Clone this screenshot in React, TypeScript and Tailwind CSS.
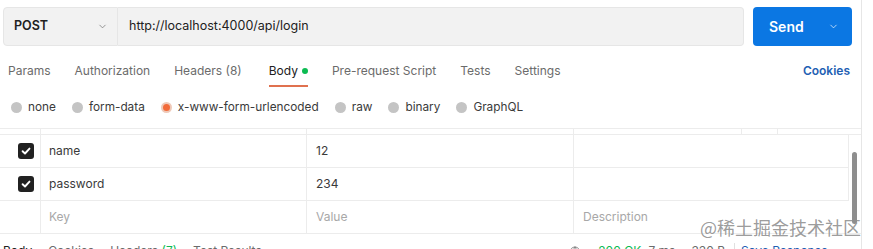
import { ChevronDown, Globe } from 'lucide-react';

const tabs = ['Params', 'Authorization', 'Headers (8)', 'Body', 'Pre-request Script', 'Tests', 'Settings'];

const bodyTypes = ['none', 'form-data', 'x-www-form-urlencoded', 'raw', 'binary', 'GraphQL'];

const rows = [
  { key: 'name', value: '12' },
  { key: 'password', value: '234' },
];

function Check() {
  return (
    <div className="w-4 h-4 rounded-[3px] bg-[#212121] flex items-center justify-center">
      <svg width="10" height="10" viewBox="0 0 10 10" fill="none">
        <path d="M1.6 5.2 L4 7.5 L8.5 2.6" stroke="white" strokeWidth="1.9" strokeLinecap="round" strokeLinejoin="round" />
      </svg>
    </div>
  );
}

export default function App() {
  return (
    <div className="w-[873px] h-[249px] overflow-hidden bg-white relative font-['Inter',sans-serif] text-[12px] text-[#212121]">
      <div className="w-[862px] h-full border-r border-[#e6e6e6] flex flex-col">
        {/* request bar */}
        <div className="flex pt-[7px] pl-[3px] pr-[9px] h-[46px] shrink-0">
          <div className="w-[115px] h-[39px] bg-[#f2f2f2] border border-[#e6e6e6] rounded-l-[4px] flex items-center justify-between pl-[10px] pr-[9px]">
            <span className="font-semibold text-[12.5px]">POST</span>
            <ChevronDown className="w-[11px] h-[11px] text-[#6b6b6b]" strokeWidth={1.5} />
          </div>
          <div className="flex-1 h-[39px] bg-[#f2f2f2] border border-l-0 border-[#e6e6e6] rounded-r-[4px] flex items-center pl-[11px] text-[12.5px]">
            http://localhost:4000/api/login
          </div>
          <div className="ml-[9px] w-[99px] h-[39px] bg-[#0b77e3] rounded-[4px] flex items-center justify-between pl-[16px] pr-[13px] text-white">
            <span className="font-semibold text-[14px]">Send</span>
            <ChevronDown className="w-[11px] h-[11px]" strokeWidth={1.5} />
          </div>
        </div>

        {/* tabs */}
        <div className="flex items-stretch mt-[10px] h-[31px] pl-[8px] pr-[11px] shrink-0">
          <div className="flex gap-[24px]">
            {tabs.map((t) => (
              <div
                key={t}
                className={
                  t === 'Body'
                    ? 'ml-[3px] flex items-center gap-[4px] border-b-2 border-[#e0714f] text-[#212121]'
                    : 'flex items-center border-b-2 border-transparent text-[#6b6b6b]'
                }
              >
                {t}
                {t === 'Body' && <span className="w-[6px] h-[6px] rounded-full bg-[#0cbb52]" />}
              </div>
            ))}
          </div>
          <div className="ml-auto flex items-center pb-[2px] font-semibold text-[#1f5fb3]">Cookies</div>
        </div>

        {/* body types */}
        <div className="flex items-center h-[41px] pl-[11px] gap-[16px] shrink-0">
          {bodyTypes.map((b) => (
            <div key={b} className="flex items-center gap-[6px]">
              {b === 'x-www-form-urlencoded' ? (
                <span className="w-[11px] h-[11px] rounded-full bg-[#efc9b8] flex items-center justify-center">
                  <span className="w-[7px] h-[7px] rounded-full bg-[#f26b3a]" />
                </span>
              ) : (
                <span className="w-[11px] h-[11px] rounded-full bg-[#c4c4c4]" />
              )}
              <span className="text-[11.8px] text-[#3a3a3a]">{b}</span>
            </div>
          ))}
        </div>

        {/* params table */}
        <div className="border-t border-[#ececec] shrink-0">
          <div className="flex h-[6px] border-b border-[#ececec]">
            <div className="w-[41px] border-r border-[#ececec]" />
            <div className="w-[266px] border-r border-[#ececec]" />
            <div className="w-[267px] border-r border-[#ececec]" />
            <div className="w-[168px] border-r border-[#ececec]" />
            <div className="w-[36px] border-r border-[#ececec]" />
          </div>
          {rows.map((r) => (
            <div key={r.key} className="flex h-[33px] border-b border-[#ececec] w-[849px]">
              <div className="w-[41px] border-r border-[#ececec] flex items-center justify-end pr-[6px]">
                <Check />
              </div>
              <div className="w-[266px] border-r border-[#ececec] flex items-center pl-[8px] text-[#3a3a3a]">{r.key}</div>
              <div className="w-[267px] border-r border-[#ececec] flex items-center pl-[9px] text-[#3a3a3a]">{r.value}</div>
              <div className="flex-1 border-r border-[#ececec]" />
            </div>
          ))}
          <div className="flex h-[33px] border-b border-[#ececec] text-[#a8a8a8]">
            <div className="w-[41px] border-r border-[#ececec]" />
            <div className="w-[266px] border-r border-[#ececec] flex items-center pl-[8px]">Key</div>
            <div className="w-[267px] border-r border-[#ececec] flex items-center pl-[9px]">Value</div>
            <div className="flex-1 flex items-center pl-[9px]">Description</div>
          </div>
        </div>

        {/* response bar */}
        <div className="flex items-start pt-[8px] pl-[3px] pr-[11px]">
          <div className="flex gap-[16px] text-[#6b6b6b]">
            <span className="text-[#212121]">Body</span>
            <span>Cookies</span>
            <span>
              Headers <span className="text-[#0cbb52]">(7)</span>
            </span>
            <span>Test Results</span>
          </div>
          <div className="ml-auto flex items-center text-[#6b6b6b]">
            <Globe className="w-[12px] h-[12px] mt-[2px]" strokeWidth={1.5} />
            <span className="ml-[17px] text-[#0cbb52]">200 OK</span>
            <span className="ml-[7px]">7 ms</span>
            <span className="ml-[16px]">330 B</span>
            <span className="ml-[9px] w-px h-[16px] bg-[#e0e0e0]" />
            <span className="ml-[6px] text-[#1f5fb3]">Save Response</span>
            <ChevronDown className="ml-[12px] w-[10px] h-[10px] mt-[3px]" strokeWidth={1.5} />
          </div>
        </div>
      </div>

      {/* scrollbar thumb */}
      <div className="absolute left-[852px] top-[152px] w-[5px] h-[72px] rounded-full bg-[#8e8e8e]" />

      {/* watermark */}
      <div className="absolute left-[700px] top-[214px] text-[18px] leading-[26px] text-[#8f8f8f]/90 font-['Noto_Sans_CJK_SC',sans-serif] whitespace-nowrap">
        @稀土掘金技术社区
      </div>
    </div>
  );
}
